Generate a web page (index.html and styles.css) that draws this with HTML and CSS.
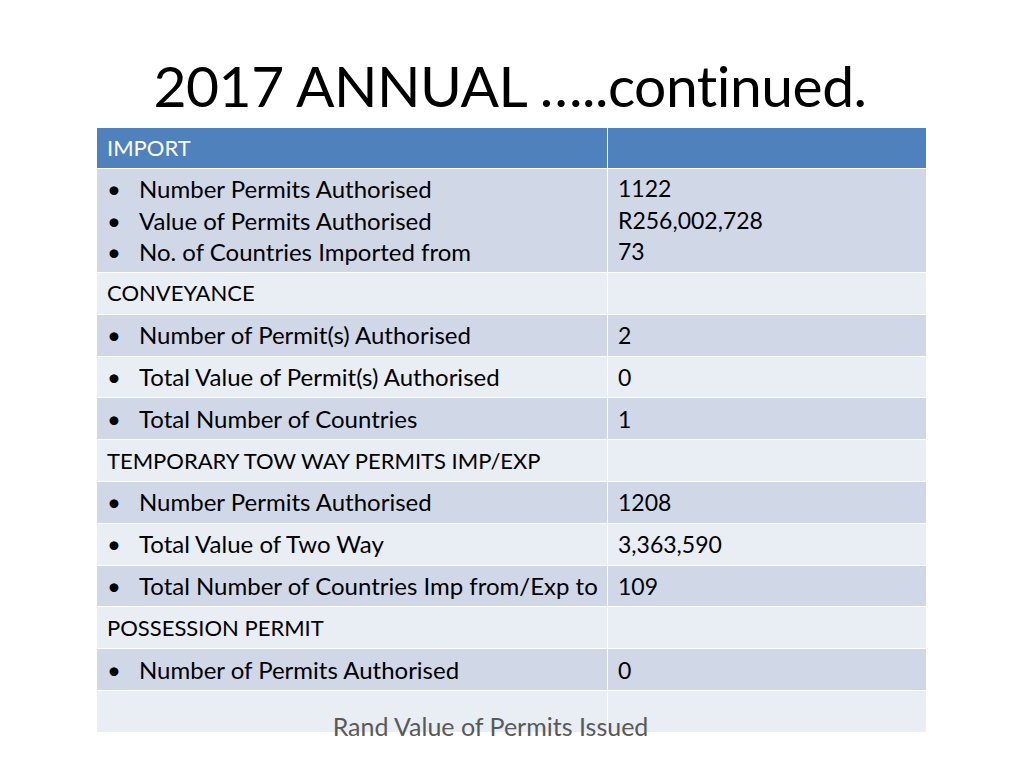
FILE: index.html
```html
<!DOCTYPE html>
<html lang="en">
<head>
    <meta charset="UTF-8">
    <meta name="viewport" content="width=device-width, initial-scale=1.0">
    <title>2017 Annual continued</title>
    <link rel="stylesheet" href="styles.css">
</head>
<body>
    <div class="slide">
        <h1 class="slide-title">2017 ANNUAL …..continued.</h1>
        <div class="table-wrap">
            <table class="permits">
                <tr class="head">
                    <td>IMPORT</td>
                    <td></td>
                </tr>
                <tr class="odd tall">
                    <td>
                        <ul>
                            <li>Number Permits Authorised</li>
                            <li>Value of Permits Authorised</li>
                            <li>No. of Countries Imported from</li>
                        </ul>
                    </td>
                    <td class="num">1122<br>R256,002,728<br>73</td>
                </tr>
                <tr class="even">
                    <td class="section">CONVEYANCE</td>
                    <td></td>
                </tr>
                <tr class="odd">
                    <td><ul><li>Number of Permit(s) Authorised</li></ul></td>
                    <td class="num">2</td>
                </tr>
                <tr class="even">
                    <td><ul><li>Total Value of Permit(s) Authorised</li></ul></td>
                    <td class="num">0</td>
                </tr>
                <tr class="odd">
                    <td><ul><li>Total Number of Countries</li></ul></td>
                    <td class="num">1</td>
                </tr>
                <tr class="even">
                    <td class="section">TEMPORARY TOW WAY PERMITS IMP/EXP</td>
                    <td></td>
                </tr>
                <tr class="odd">
                    <td><ul><li>Number Permits Authorised</li></ul></td>
                    <td class="num">1208</td>
                </tr>
                <tr class="even">
                    <td><ul><li>Total Value of Two Way</li></ul></td>
                    <td class="num">3,363,590</td>
                </tr>
                <tr class="odd">
                    <td><ul><li>Total Number of Countries Imp from/Exp to</li></ul></td>
                    <td class="num">109</td>
                </tr>
                <tr class="even">
                    <td class="section">POSSESSION PERMIT</td>
                    <td></td>
                </tr>
                <tr class="odd">
                    <td><ul><li>Number of Permits Authorised</li></ul></td>
                    <td class="num">0</td>
                </tr>
                <tr class="even">
                    <td></td>
                    <td></td>
                </tr>
            </table>
            <div class="chart-caption">Rand Value of Permits Issued</div>
        </div>
    </div>
</body>
</html>
```

FILE: styles.css
```css
* {
    box-sizing: border-box;
    margin: 0;
    padding: 0;
}
body {
    font-family: Lato, 'Noto Sans', sans-serif;
    background-color: #fff;
    color: #000;
}
.slide {
    width: 1024px;
    height: 768px;
    overflow: hidden;
}
.slide-title {
    font-size: 57px;
    font-weight: normal;
    text-align: center;
    line-height: 60px;
    padding-top: 55px;
    padding-right: 4px;
    height: 127px;
    letter-spacing: -0.5px;
}
.table-wrap {
    position: relative;
    width: 831px;
    margin-left: 96px;
}
.permits {
    width: 100%;
    border-collapse: collapse;
    table-layout: fixed;
    font-size: 24px;
}
.permits td {
    border: 1px solid #fff;
    padding: 0 10px;
    height: 41.8px;
    vertical-align: middle;
    line-height: 28px;
    white-space: nowrap;
}
.permits td:first-child {
    width: 511px;
    padding-right: 4px;
}
.permits tr.head td {
    background-color: #4f81bd;
    color: #fff;
    font-size: 22px;
    height: 41px;
}
.permits tr.odd td {
    background-color: #d0d8e8;
}
.permits tr.even td {
    background-color: #e9edf4;
}
.permits tr.tall td {
    height: 104px;
    vertical-align: top;
    padding-top: 4px;
    line-height: 31.5px;
}
.permits .section {
    font-size: 22px;
}
.permits .num {
    font-size: 23px;
}
.permits ul {
    list-style: none;
}
.permits li {
    position: relative;
    padding-left: 32px;
}
.permits li::before {
    content: "\2022";
    position: absolute;
    left: 0;
}
.chart-caption {
    position: absolute;
    left: 0;
    right: 0;
    bottom: -8px;
    text-align: center;
    padding-right: 42px;
    font-size: 25px;
    color: #595959;
}
```
